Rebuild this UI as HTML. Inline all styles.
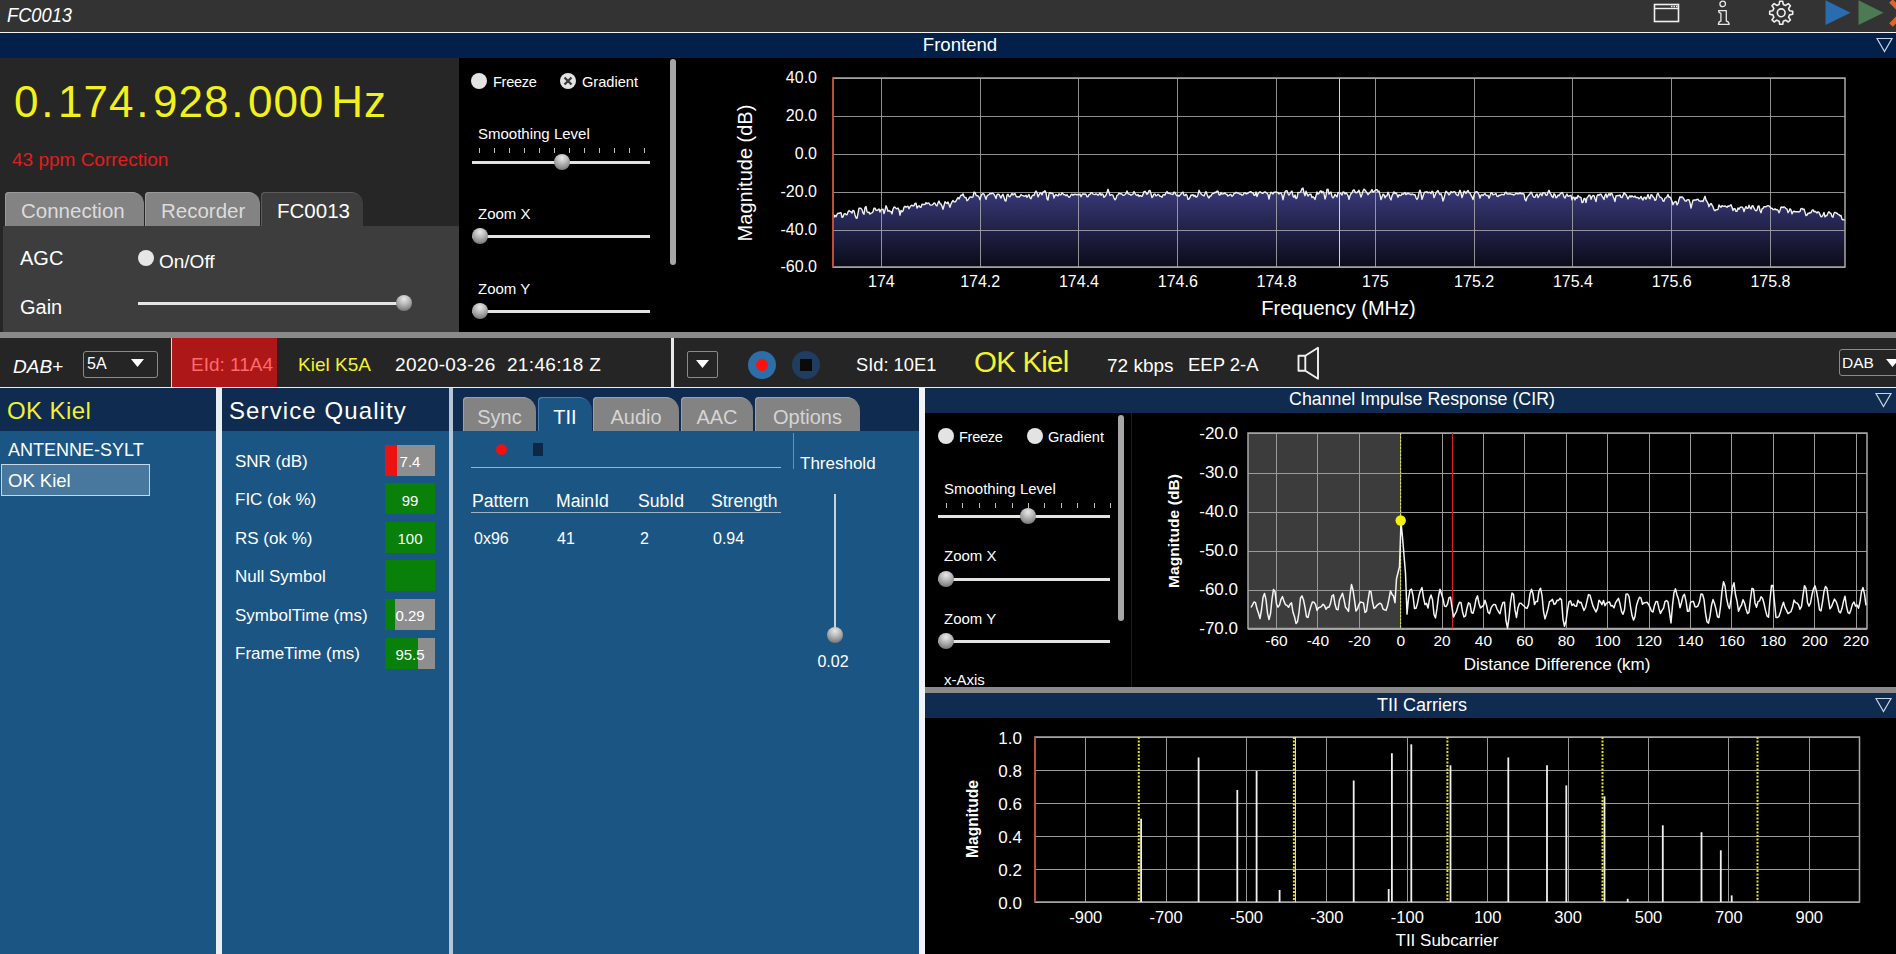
<!DOCTYPE html><html><head><meta charset="utf-8"><style>
html,body{margin:0;padding:0;width:1896px;height:954px;overflow:hidden;background:#262626;}
body{position:relative;font-family:"Liberation Sans",sans-serif;}
.t{position:absolute;white-space:nowrap;}
.b{position:absolute;}
.d{margin:0 3.5px 0 1.8px;}
svg{position:absolute;}
</style></head><body>
<div class="b" style="left:0px;top:0px;width:1896px;height:32px;background:#333333;"></div>
<div class="b" style="left:0px;top:32px;width:1896px;height:1px;background:#f4f4f4;"></div>
<div class="t" style="left:7px;top:4.1px;font-size:21px;line-height:21px;color:#ffffff;font-style:italic;transform:scaleX(0.87);transform-origin:0 0;">FC0013</div>
<div class="b" style="left:0px;top:33px;width:1896px;height:25px;background:#03204a;"></div>
<div class="t" style="left:660px;width:600px;text-align:center;top:35.5px;font-size:18.6px;line-height:18.6px;color:#ffffff;">Frontend</div>
<div class="b" style="left:0px;top:58px;width:459px;height:274px;background:#262626;"></div>
<div class="t" style="left:14px;top:80.3px;font-size:44px;line-height:44px;color:#f2f21a;letter-spacing:1px;">0<span class="d">.</span>174<span class="d">.</span>928<span class="d">.</span>000<span style="margin-left:7px">Hz</span></div>
<div class="t" style="left:12px;top:150.3px;font-size:19px;line-height:19px;color:#e41c1c;">43 ppm Correction</div>
<div class="b" style="left:3px;top:226px;width:456px;height:106px;background:#3d3d3d;"></div>
<div class="b" style="left:5px;top:192px;width:139px;height:34px;background:#838383;border-radius:4px 12px 0 0;box-shadow:inset 1px 1px 0 #9a9a9a;"></div>
<div class="t" style="left:21px;top:201.1px;font-size:20.5px;line-height:20.5px;color:#dcdcdc;">Connection</div>
<div class="b" style="left:145px;top:192px;width:115px;height:34px;background:#838383;border-radius:4px 12px 0 0;box-shadow:inset 1px 1px 0 #9a9a9a;"></div>
<div class="t" style="left:161px;top:201.1px;font-size:20.5px;line-height:20.5px;color:#dcdcdc;">Recorder</div>
<div class="b" style="left:261px;top:192px;width:102px;height:34px;background:#3d3d3d;border-radius:4px 12px 0 0;box-shadow:inset 1px 1px 0 #5a5a5a;"></div>
<div class="t" style="left:277px;top:201.1px;font-size:20.5px;line-height:20.5px;color:#ffffff;">FC0013</div>
<div class="t" style="left:20px;top:248.4px;font-size:20px;line-height:20px;color:#ffffff;">AGC</div>
<div class="b" style="left:138px;top:250px;width:16px;height:16px;border-radius:50%;background:#e6e6e6;"></div>
<div class="t" style="left:159px;top:251.8px;font-size:19px;line-height:19px;color:#ffffff;">On/Off</div>
<div class="t" style="left:20px;top:297.4px;font-size:20px;line-height:20px;color:#ffffff;">Gain</div>
<div class="b" style="left:138px;top:302px;width:260px;height:3px;background:#e6e6e6;"></div>
<div class="b" style="left:396px;top:295px;width:16px;height:16px;border-radius:50%;background:radial-gradient(circle at 50% 25%, #e8e8e8 0%, #bdbdbd 35%, #8a8a8a 70%, #5e5e5e 100%);"></div>
<div class="b" style="left:459px;top:58px;width:231px;height:274px;background:#000000;"></div>
<div class="b" style="left:471px;top:73px;width:16px;height:16px;border-radius:50%;background:#e3e3e3;"></div>
<div class="t" style="left:493px;top:74.5px;font-size:14.6px;line-height:14.6px;color:#ffffff;letter-spacing:-0.3px;">Freeze</div>
<div class="b" style="left:560px;top:73px;width:16px;height:16px;border-radius:50%;background:#e3e3e3;"></div>
<svg style="left:563px;top:76px" width="10" height="10"><path d="M1.5 1.5L8.5 8.5M8.5 1.5L1.5 8.5" stroke="#3a3a3a" stroke-width="2.2"/></svg>
<div class="t" style="left:582px;top:74.5px;font-size:14.6px;line-height:14.6px;color:#ffffff;">Gradient</div>
<div class="t" style="left:478px;top:125.8px;font-size:15px;line-height:15px;color:#ffffff;">Smoothing Level</div>
<div class="b" style="left:479px;top:148px;width:1px;height:5px;background:#c0c0c0;"></div>
<div class="b" style="left:494px;top:148px;width:1px;height:5px;background:#c0c0c0;"></div>
<div class="b" style="left:509px;top:148px;width:1px;height:5px;background:#c0c0c0;"></div>
<div class="b" style="left:524px;top:148px;width:1px;height:5px;background:#c0c0c0;"></div>
<div class="b" style="left:539px;top:148px;width:1px;height:5px;background:#c0c0c0;"></div>
<div class="b" style="left:554px;top:148px;width:1px;height:5px;background:#c0c0c0;"></div>
<div class="b" style="left:569px;top:148px;width:1px;height:5px;background:#c0c0c0;"></div>
<div class="b" style="left:584px;top:148px;width:1px;height:5px;background:#c0c0c0;"></div>
<div class="b" style="left:599px;top:148px;width:1px;height:5px;background:#c0c0c0;"></div>
<div class="b" style="left:614px;top:148px;width:1px;height:5px;background:#c0c0c0;"></div>
<div class="b" style="left:629px;top:148px;width:1px;height:5px;background:#c0c0c0;"></div>
<div class="b" style="left:644px;top:148px;width:1px;height:5px;background:#c0c0c0;"></div>
<div class="b" style="left:472px;top:161px;width:178px;height:3px;background:#e3e3e3;"></div>
<div class="b" style="left:554px;top:154px;width:16px;height:16px;border-radius:50%;background:radial-gradient(circle at 50% 25%, #e8e8e8 0%, #bdbdbd 35%, #8a8a8a 70%, #5e5e5e 100%);"></div>
<div class="t" style="left:478px;top:205.8px;font-size:15px;line-height:15px;color:#ffffff;">Zoom X</div>
<div class="b" style="left:472px;top:235px;width:178px;height:3px;background:#e3e3e3;"></div>
<div class="b" style="left:472px;top:228px;width:16px;height:16px;border-radius:50%;background:radial-gradient(circle at 50% 25%, #e8e8e8 0%, #bdbdbd 35%, #8a8a8a 70%, #5e5e5e 100%);"></div>
<div class="t" style="left:478px;top:280.8px;font-size:15px;line-height:15px;color:#ffffff;">Zoom Y</div>
<div class="b" style="left:472px;top:310px;width:178px;height:3px;background:#e3e3e3;"></div>
<div class="b" style="left:472px;top:303px;width:16px;height:16px;border-radius:50%;background:radial-gradient(circle at 50% 25%, #e8e8e8 0%, #bdbdbd 35%, #8a8a8a 70%, #5e5e5e 100%);"></div>
<div class="b" style="left:670px;top:59px;width:6px;height:206px;border-radius:3px;background:#a6a6a6;"></div>
<div class="b" style="left:690px;top:58px;width:1206px;height:274px;background:#000000;"></div>
<svg style="left:0;top:0" width="1896" height="954"><defs><linearGradient id="fg" x1="0" y1="0" x2="0" y2="1"><stop offset="0" stop-color="#3a3a7c"/><stop offset="1" stop-color="#0b0b1a"/></linearGradient></defs><path d="M833,267 L833.0,212.2 L834.0,217.3 L835.0,215.3 L836.0,216.7 L837.0,214.5 L838.0,213.1 L839.0,213.4 L840.0,212.8 L841.0,212.7 L842.0,217.3 L843.0,216.9 L844.0,214.1 L845.0,213.5 L846.0,214.6 L847.0,214.7 L848.0,212.0 L849.0,210.6 L850.0,211.4 L851.0,211.7 L852.0,213.0 L853.0,210.3 L854.0,210.8 L855.0,214.9 L856.0,217.8 L857.0,218.3 L858.0,213.3 L859.0,208.2 L860.0,208.1 L861.0,208.4 L862.0,209.6 L863.0,213.1 L864.0,214.2 L865.0,207.8 L866.0,206.5 L867.0,211.7 L868.0,212.5 L869.0,212.1 L870.0,214.1 L871.0,213.2 L872.0,212.9 L873.0,211.8 L874.0,208.2 L875.0,208.1 L876.0,210.1 L877.0,210.5 L878.0,209.7 L879.0,209.0 L880.0,212.1 L881.0,209.7 L882.0,209.4 L883.0,209.2 L884.0,213.6 L885.0,210.1 L886.0,205.8 L887.0,208.0 L888.0,211.2 L889.0,210.5 L890.0,211.5 L891.0,211.5 L892.0,213.9 L893.0,209.2 L894.0,207.0 L895.0,207.3 L896.0,208.4 L897.0,208.8 L898.0,208.1 L899.0,210.0 L900.0,215.2 L901.0,210.5 L902.0,211.7 L903.0,211.0 L904.0,207.3 L905.0,206.3 L906.0,207.2 L907.0,206.6 L908.0,206.2 L909.0,208.7 L910.0,206.9 L911.0,205.7 L912.0,205.2 L913.0,206.0 L914.0,205.6 L915.0,203.4 L916.0,203.1 L917.0,208.0 L918.0,206.5 L919.0,205.8 L920.0,207.0 L921.0,207.2 L922.0,204.3 L923.0,204.5 L924.0,204.5 L925.0,204.3 L926.0,202.6 L927.0,203.7 L928.0,203.0 L929.0,203.1 L930.0,204.9 L931.0,205.1 L932.0,205.0 L933.0,204.2 L934.0,203.0 L935.0,203.2 L936.0,205.2 L937.0,205.9 L938.0,202.9 L939.0,201.0 L940.0,203.6 L941.0,204.0 L942.0,206.1 L943.0,209.2 L944.0,205.6 L945.0,201.6 L946.0,202.9 L947.0,203.5 L948.0,202.0 L949.0,204.5 L950.0,207.2 L951.0,203.9 L952.0,202.0 L953.0,200.5 L954.0,201.7 L955.0,202.0 L956.0,201.0 L957.0,199.1 L958.0,197.5 L959.0,198.9 L960.0,197.0 L961.0,195.2 L962.0,195.4 L963.0,193.8 L964.0,196.5 L965.0,197.6 L966.0,197.5 L967.0,200.7 L968.0,200.0 L969.0,198.3 L970.0,197.0 L971.0,196.9 L972.0,197.5 L973.0,196.9 L974.0,192.2 L975.0,192.4 L976.0,195.1 L977.0,195.8 L978.0,196.0 L979.0,196.9 L980.0,199.7 L981.0,195.8 L982.0,194.1 L983.0,193.7 L984.0,194.2 L985.0,196.5 L986.0,199.3 L987.0,196.0 L988.0,195.1 L989.0,194.6 L990.0,193.5 L991.0,193.9 L992.0,193.2 L993.0,193.5 L994.0,194.3 L995.0,196.0 L996.0,198.5 L997.0,194.6 L998.0,194.1 L999.0,194.4 L1000.0,196.1 L1001.0,198.1 L1002.0,195.6 L1003.0,194.3 L1004.0,197.4 L1005.0,200.5 L1006.0,201.0 L1007.0,195.1 L1008.0,194.2 L1009.0,196.6 L1010.0,196.7 L1011.0,195.0 L1012.0,193.5 L1013.0,194.9 L1014.0,194.0 L1015.0,193.6 L1016.0,196.0 L1017.0,197.0 L1018.0,196.6 L1019.0,197.2 L1020.0,196.2 L1021.0,194.6 L1022.0,195.3 L1023.0,195.7 L1024.0,196.2 L1025.0,196.1 L1026.0,195.3 L1027.0,197.4 L1028.0,195.9 L1029.0,194.5 L1030.0,197.9 L1031.0,198.7 L1032.0,196.0 L1033.0,195.1 L1034.0,195.5 L1035.0,192.7 L1036.0,191.0 L1037.0,192.6 L1038.0,196.9 L1039.0,194.8 L1040.0,193.0 L1041.0,193.0 L1042.0,194.8 L1043.0,191.9 L1044.0,192.0 L1045.0,190.7 L1046.0,192.7 L1047.0,198.7 L1048.0,200.0 L1049.0,193.6 L1050.0,192.5 L1051.0,193.5 L1052.0,193.2 L1053.0,193.7 L1054.0,198.0 L1055.0,195.6 L1056.0,194.6 L1057.0,195.4 L1058.0,195.9 L1059.0,193.7 L1060.0,194.9 L1061.0,194.9 L1062.0,192.8 L1063.0,193.7 L1064.0,194.9 L1065.0,194.6 L1066.0,195.7 L1067.0,194.6 L1068.0,196.1 L1069.0,197.3 L1070.0,196.7 L1071.0,194.7 L1072.0,194.2 L1073.0,195.2 L1074.0,194.3 L1075.0,194.5 L1076.0,194.2 L1077.0,195.0 L1078.0,194.3 L1079.0,194.8 L1080.0,194.0 L1081.0,196.8 L1082.0,194.8 L1083.0,193.7 L1084.0,194.4 L1085.0,194.0 L1086.0,194.4 L1087.0,196.8 L1088.0,196.6 L1089.0,194.5 L1090.0,194.5 L1091.0,192.7 L1092.0,192.8 L1093.0,194.1 L1094.0,194.4 L1095.0,194.6 L1096.0,193.7 L1097.0,194.4 L1098.0,195.3 L1099.0,194.2 L1100.0,192.9 L1101.0,195.3 L1102.0,193.8 L1103.0,194.5 L1104.0,197.4 L1105.0,196.2 L1106.0,195.0 L1107.0,192.4 L1108.0,189.3 L1109.0,192.2 L1110.0,195.3 L1111.0,194.9 L1112.0,194.7 L1113.0,195.4 L1114.0,198.1 L1115.0,199.8 L1116.0,198.6 L1117.0,195.3 L1118.0,194.9 L1119.0,193.1 L1120.0,193.8 L1121.0,193.6 L1122.0,194.2 L1123.0,195.2 L1124.0,195.2 L1125.0,194.5 L1126.0,193.5 L1127.0,190.9 L1128.0,193.6 L1129.0,194.2 L1130.0,194.2 L1131.0,195.2 L1132.0,194.7 L1133.0,194.0 L1134.0,191.5 L1135.0,193.4 L1136.0,194.9 L1137.0,195.5 L1138.0,194.4 L1139.0,196.5 L1140.0,195.5 L1141.0,196.0 L1142.0,196.4 L1143.0,194.4 L1144.0,191.6 L1145.0,191.3 L1146.0,192.6 L1147.0,194.4 L1148.0,193.2 L1149.0,190.7 L1150.0,190.4 L1151.0,193.8 L1152.0,197.6 L1153.0,196.3 L1154.0,194.1 L1155.0,194.0 L1156.0,195.8 L1157.0,195.4 L1158.0,194.3 L1159.0,195.0 L1160.0,196.3 L1161.0,196.4 L1162.0,197.3 L1163.0,194.9 L1164.0,194.8 L1165.0,195.0 L1166.0,192.7 L1167.0,191.6 L1168.0,193.4 L1169.0,193.0 L1170.0,193.7 L1171.0,194.0 L1172.0,194.1 L1173.0,194.5 L1174.0,192.1 L1175.0,192.5 L1176.0,194.6 L1177.0,195.7 L1178.0,195.2 L1179.0,196.3 L1180.0,195.1 L1181.0,194.1 L1182.0,192.6 L1183.0,192.1 L1184.0,195.2 L1185.0,195.6 L1186.0,194.3 L1187.0,195.4 L1188.0,199.3 L1189.0,199.0 L1190.0,197.4 L1191.0,194.9 L1192.0,195.3 L1193.0,194.6 L1194.0,196.4 L1195.0,195.2 L1196.0,197.2 L1197.0,196.7 L1198.0,194.5 L1199.0,190.3 L1200.0,192.4 L1201.0,193.7 L1202.0,194.9 L1203.0,195.4 L1204.0,195.9 L1205.0,193.5 L1206.0,191.6 L1207.0,194.3 L1208.0,196.7 L1209.0,198.0 L1210.0,195.9 L1211.0,196.0 L1212.0,193.8 L1213.0,193.5 L1214.0,193.2 L1215.0,192.2 L1216.0,192.6 L1217.0,191.3 L1218.0,191.1 L1219.0,194.9 L1220.0,195.0 L1221.0,192.5 L1222.0,194.1 L1223.0,193.8 L1224.0,193.5 L1225.0,193.0 L1226.0,194.1 L1227.0,194.5 L1228.0,196.0 L1229.0,195.4 L1230.0,194.4 L1231.0,194.5 L1232.0,196.3 L1233.0,195.5 L1234.0,193.5 L1235.0,193.4 L1236.0,192.3 L1237.0,193.0 L1238.0,192.9 L1239.0,193.5 L1240.0,194.3 L1241.0,193.9 L1242.0,195.2 L1243.0,194.8 L1244.0,193.2 L1245.0,192.8 L1246.0,193.8 L1247.0,193.8 L1248.0,193.1 L1249.0,192.3 L1250.0,191.8 L1251.0,191.8 L1252.0,192.8 L1253.0,192.8 L1254.0,195.3 L1255.0,195.3 L1256.0,191.9 L1257.0,196.5 L1258.0,193.8 L1259.0,192.6 L1260.0,191.7 L1261.0,192.5 L1262.0,193.2 L1263.0,193.2 L1264.0,192.3 L1265.0,191.8 L1266.0,192.6 L1267.0,193.2 L1268.0,194.7 L1269.0,199.0 L1270.0,194.5 L1271.0,192.2 L1272.0,193.1 L1273.0,194.0 L1274.0,192.2 L1275.0,192.2 L1276.0,191.9 L1277.0,192.5 L1278.0,192.5 L1279.0,194.0 L1280.0,193.1 L1281.0,192.8 L1282.0,194.8 L1283.0,199.7 L1284.0,195.3 L1285.0,191.7 L1286.0,190.8 L1287.0,190.7 L1288.0,193.6 L1289.0,195.0 L1290.0,193.6 L1291.0,192.0 L1292.0,191.1 L1293.0,196.0 L1294.0,197.3 L1295.0,195.0 L1296.0,198.6 L1297.0,197.8 L1298.0,192.5 L1299.0,192.6 L1300.0,192.4 L1301.0,191.3 L1302.0,188.6 L1303.0,188.1 L1304.0,192.9 L1305.0,195.7 L1306.0,191.2 L1307.0,193.9 L1308.0,196.0 L1309.0,194.8 L1310.0,194.1 L1311.0,194.3 L1312.0,197.5 L1313.0,196.7 L1314.0,197.7 L1315.0,199.4 L1316.0,195.8 L1317.0,192.0 L1318.0,194.2 L1319.0,193.5 L1320.0,191.4 L1321.0,190.8 L1322.0,192.9 L1323.0,191.5 L1324.0,193.4 L1325.0,199.0 L1326.0,195.7 L1327.0,189.4 L1328.0,189.2 L1329.0,194.0 L1330.0,192.8 L1331.0,192.0 L1332.0,196.6 L1333.0,197.9 L1334.0,196.7 L1335.0,194.3 L1336.0,195.8 L1337.0,196.9 L1338.0,192.7 L1339.0,192.5 L1340.0,193.0 L1341.0,193.8 L1342.0,195.1 L1343.0,191.9 L1344.0,192.1 L1345.0,194.0 L1346.0,192.8 L1347.0,193.9 L1348.0,195.6 L1349.0,199.3 L1350.0,195.7 L1351.0,193.6 L1352.0,192.8 L1353.0,190.4 L1354.0,189.8 L1355.0,191.8 L1356.0,192.9 L1357.0,192.5 L1358.0,191.6 L1359.0,190.3 L1360.0,193.7 L1361.0,197.1 L1362.0,194.3 L1363.0,191.0 L1364.0,189.2 L1365.0,190.1 L1366.0,191.5 L1367.0,192.9 L1368.0,194.7 L1369.0,193.4 L1370.0,192.5 L1371.0,191.3 L1372.0,189.5 L1373.0,192.2 L1374.0,191.6 L1375.0,190.4 L1376.0,189.7 L1377.0,189.7 L1378.0,191.6 L1379.0,191.1 L1380.0,194.9 L1381.0,199.6 L1382.0,196.9 L1383.0,194.2 L1384.0,194.8 L1385.0,197.8 L1386.0,195.9 L1387.0,195.7 L1388.0,192.2 L1389.0,194.2 L1390.0,198.0 L1391.0,199.9 L1392.0,195.9 L1393.0,193.9 L1394.0,191.8 L1395.0,193.6 L1396.0,192.8 L1397.0,194.4 L1398.0,197.2 L1399.0,194.7 L1400.0,195.6 L1401.0,195.3 L1402.0,193.7 L1403.0,194.4 L1404.0,193.4 L1405.0,192.5 L1406.0,194.6 L1407.0,193.9 L1408.0,193.1 L1409.0,193.9 L1410.0,194.0 L1411.0,194.8 L1412.0,193.9 L1413.0,194.3 L1414.0,194.8 L1415.0,194.6 L1416.0,197.8 L1417.0,199.4 L1418.0,197.6 L1419.0,192.7 L1420.0,190.1 L1421.0,193.3 L1422.0,199.4 L1423.0,196.3 L1424.0,193.3 L1425.0,191.9 L1426.0,192.2 L1427.0,191.7 L1428.0,192.9 L1429.0,192.3 L1430.0,192.4 L1431.0,193.6 L1432.0,191.2 L1433.0,192.1 L1434.0,197.6 L1435.0,195.5 L1436.0,192.7 L1437.0,191.5 L1438.0,190.5 L1439.0,193.0 L1440.0,194.6 L1441.0,193.7 L1442.0,196.3 L1443.0,201.0 L1444.0,198.1 L1445.0,194.1 L1446.0,191.3 L1447.0,192.1 L1448.0,193.3 L1449.0,194.9 L1450.0,193.7 L1451.0,191.6 L1452.0,192.5 L1453.0,192.1 L1454.0,191.7 L1455.0,191.9 L1456.0,194.0 L1457.0,195.0 L1458.0,195.7 L1459.0,192.7 L1460.0,190.3 L1461.0,192.9 L1462.0,197.5 L1463.0,194.8 L1464.0,191.2 L1465.0,191.8 L1466.0,193.5 L1467.0,191.5 L1468.0,190.4 L1469.0,192.6 L1470.0,193.0 L1471.0,195.2 L1472.0,196.8 L1473.0,199.6 L1474.0,195.0 L1475.0,192.7 L1476.0,191.6 L1477.0,191.8 L1478.0,193.0 L1479.0,194.7 L1480.0,198.0 L1481.0,195.2 L1482.0,194.7 L1483.0,195.6 L1484.0,194.3 L1485.0,193.6 L1486.0,195.2 L1487.0,195.7 L1488.0,195.3 L1489.0,198.2 L1490.0,195.7 L1491.0,192.7 L1492.0,192.9 L1493.0,194.8 L1494.0,194.4 L1495.0,194.1 L1496.0,193.5 L1497.0,196.2 L1498.0,196.6 L1499.0,195.1 L1500.0,195.5 L1501.0,194.7 L1502.0,194.3 L1503.0,194.6 L1504.0,194.9 L1505.0,192.7 L1506.0,192.2 L1507.0,193.8 L1508.0,194.0 L1509.0,194.0 L1510.0,193.6 L1511.0,194.2 L1512.0,194.3 L1513.0,194.5 L1514.0,195.0 L1515.0,194.3 L1516.0,193.1 L1517.0,193.8 L1518.0,193.7 L1519.0,193.8 L1520.0,192.6 L1521.0,193.9 L1522.0,193.7 L1523.0,193.5 L1524.0,194.1 L1525.0,199.4 L1526.0,200.9 L1527.0,197.5 L1528.0,196.1 L1529.0,195.0 L1530.0,193.7 L1531.0,192.2 L1532.0,193.4 L1533.0,196.1 L1534.0,197.4 L1535.0,197.2 L1536.0,194.9 L1537.0,193.9 L1538.0,197.6 L1539.0,196.0 L1540.0,193.9 L1541.0,193.8 L1542.0,195.7 L1543.0,192.8 L1544.0,192.9 L1545.0,193.2 L1546.0,195.2 L1547.0,195.2 L1548.0,192.3 L1549.0,190.3 L1550.0,193.0 L1551.0,194.4 L1552.0,196.6 L1553.0,197.5 L1554.0,193.7 L1555.0,194.6 L1556.0,197.9 L1557.0,197.1 L1558.0,195.0 L1559.0,195.8 L1560.0,194.1 L1561.0,193.2 L1562.0,192.5 L1563.0,193.9 L1564.0,196.9 L1565.0,198.0 L1566.0,195.7 L1567.0,194.0 L1568.0,196.3 L1569.0,196.0 L1570.0,195.6 L1571.0,195.3 L1572.0,199.8 L1573.0,197.5 L1574.0,197.2 L1575.0,199.9 L1576.0,197.3 L1577.0,198.2 L1578.0,195.5 L1579.0,196.8 L1580.0,197.1 L1581.0,197.7 L1582.0,202.6 L1583.0,202.4 L1584.0,198.5 L1585.0,198.4 L1586.0,202.5 L1587.0,197.7 L1588.0,196.7 L1589.0,195.1 L1590.0,195.3 L1591.0,199.2 L1592.0,196.6 L1593.0,195.4 L1594.0,195.6 L1595.0,198.8 L1596.0,201.6 L1597.0,196.0 L1598.0,194.6 L1599.0,195.4 L1600.0,194.1 L1601.0,194.3 L1602.0,196.2 L1603.0,197.7 L1604.0,199.5 L1605.0,195.4 L1606.0,193.9 L1607.0,197.5 L1608.0,195.5 L1609.0,193.5 L1610.0,195.5 L1611.0,193.3 L1612.0,193.7 L1613.0,196.5 L1614.0,198.5 L1615.0,201.5 L1616.0,195.8 L1617.0,195.9 L1618.0,195.4 L1619.0,195.7 L1620.0,194.9 L1621.0,197.4 L1622.0,197.6 L1623.0,195.4 L1624.0,192.7 L1625.0,193.9 L1626.0,194.6 L1627.0,196.7 L1628.0,198.9 L1629.0,197.0 L1630.0,195.8 L1631.0,197.0 L1632.0,195.8 L1633.0,196.7 L1634.0,197.0 L1635.0,196.0 L1636.0,197.6 L1637.0,197.4 L1638.0,197.5 L1639.0,198.7 L1640.0,198.0 L1641.0,196.4 L1642.0,198.7 L1643.0,200.0 L1644.0,197.4 L1645.0,197.3 L1646.0,199.2 L1647.0,197.0 L1648.0,194.5 L1649.0,197.7 L1650.0,198.8 L1651.0,194.6 L1652.0,195.1 L1653.0,196.9 L1654.0,197.7 L1655.0,200.4 L1656.0,199.6 L1657.0,194.7 L1658.0,193.3 L1659.0,195.5 L1660.0,197.2 L1661.0,197.5 L1662.0,198.5 L1663.0,201.0 L1664.0,201.2 L1665.0,198.1 L1666.0,197.9 L1667.0,196.6 L1668.0,194.5 L1669.0,197.2 L1670.0,197.0 L1671.0,198.7 L1672.0,201.2 L1673.0,204.7 L1674.0,202.5 L1675.0,201.7 L1676.0,201.5 L1677.0,204.9 L1678.0,203.4 L1679.0,199.5 L1680.0,196.8 L1681.0,197.6 L1682.0,196.8 L1683.0,197.8 L1684.0,199.1 L1685.0,200.8 L1686.0,201.2 L1687.0,199.9 L1688.0,199.6 L1689.0,199.8 L1690.0,202.8 L1691.0,208.0 L1692.0,203.9 L1693.0,200.2 L1694.0,200.3 L1695.0,199.8 L1696.0,200.1 L1697.0,199.4 L1698.0,199.2 L1699.0,200.9 L1700.0,201.0 L1701.0,201.6 L1702.0,200.7 L1703.0,201.5 L1704.0,198.7 L1705.0,196.3 L1706.0,200.0 L1707.0,201.5 L1708.0,203.4 L1709.0,206.7 L1710.0,204.5 L1711.0,203.5 L1712.0,205.0 L1713.0,206.7 L1714.0,209.7 L1715.0,210.7 L1716.0,209.6 L1717.0,209.8 L1718.0,209.4 L1719.0,205.0 L1720.0,206.4 L1721.0,207.2 L1722.0,205.7 L1723.0,206.2 L1724.0,206.4 L1725.0,205.9 L1726.0,206.7 L1727.0,207.2 L1728.0,206.0 L1729.0,206.2 L1730.0,205.6 L1731.0,204.8 L1732.0,207.3 L1733.0,210.5 L1734.0,208.6 L1735.0,208.7 L1736.0,211.4 L1737.0,211.3 L1738.0,208.0 L1739.0,209.2 L1740.0,207.5 L1741.0,207.2 L1742.0,206.9 L1743.0,208.1 L1744.0,211.6 L1745.0,208.5 L1746.0,206.5 L1747.0,208.4 L1748.0,208.4 L1749.0,205.2 L1750.0,207.7 L1751.0,208.9 L1752.0,206.0 L1753.0,205.7 L1754.0,208.2 L1755.0,209.9 L1756.0,210.8 L1757.0,210.2 L1758.0,206.2 L1759.0,206.0 L1760.0,210.5 L1761.0,212.7 L1762.0,208.9 L1763.0,208.3 L1764.0,206.7 L1765.0,206.8 L1766.0,206.7 L1767.0,206.2 L1768.0,205.7 L1769.0,205.9 L1770.0,206.8 L1771.0,208.3 L1772.0,208.1 L1773.0,209.5 L1774.0,209.6 L1775.0,208.8 L1776.0,209.8 L1777.0,209.5 L1778.0,210.3 L1779.0,212.8 L1780.0,210.4 L1781.0,207.2 L1782.0,207.0 L1783.0,207.6 L1784.0,206.9 L1785.0,207.5 L1786.0,208.6 L1787.0,209.1 L1788.0,212.5 L1789.0,211.1 L1790.0,208.8 L1791.0,210.0 L1792.0,213.9 L1793.0,211.8 L1794.0,211.1 L1795.0,211.9 L1796.0,211.6 L1797.0,211.7 L1798.0,211.7 L1799.0,212.0 L1800.0,211.4 L1801.0,208.6 L1802.0,208.4 L1803.0,209.6 L1804.0,209.0 L1805.0,212.1 L1806.0,215.5 L1807.0,215.1 L1808.0,213.2 L1809.0,213.5 L1810.0,212.5 L1811.0,212.8 L1812.0,210.4 L1813.0,209.7 L1814.0,211.8 L1815.0,211.2 L1816.0,212.0 L1817.0,213.1 L1818.0,211.7 L1819.0,212.4 L1820.0,214.6 L1821.0,216.7 L1822.0,216.5 L1823.0,214.8 L1824.0,212.5 L1825.0,216.9 L1826.0,215.8 L1827.0,215.5 L1828.0,212.9 L1829.0,211.8 L1830.0,213.0 L1831.0,213.5 L1832.0,216.4 L1833.0,217.2 L1834.0,213.3 L1835.0,212.2 L1836.0,213.0 L1837.0,213.2 L1838.0,214.3 L1839.0,214.7 L1840.0,215.8 L1841.0,215.4 L1842.0,219.3 L1843.0,219.8 L1844.0,219.4 L1845.0,220.8 L1845,267 Z" fill="url(#fg)"/><path d="M833,78.5H1845 M833,116.5H1845 M833,154.5H1845 M833,192.5H1845 M833,230.5H1845 M833,267.5H1845 M881.5,78V267 M980.5,78V267 M1078.5,78V267 M1177.5,78V267 M1276.5,78V267 M1375.5,78V267 M1474.5,78V267 M1572.5,78V267 M1671.5,78V267 M1770.5,78V267" stroke="#a8a8a8" stroke-width="1" stroke-opacity="0.85" fill="none"/><polyline points="833.0,212.2 834.0,217.3 835.0,215.3 836.0,216.7 837.0,214.5 838.0,213.1 839.0,213.4 840.0,212.8 841.0,212.7 842.0,217.3 843.0,216.9 844.0,214.1 845.0,213.5 846.0,214.6 847.0,214.7 848.0,212.0 849.0,210.6 850.0,211.4 851.0,211.7 852.0,213.0 853.0,210.3 854.0,210.8 855.0,214.9 856.0,217.8 857.0,218.3 858.0,213.3 859.0,208.2 860.0,208.1 861.0,208.4 862.0,209.6 863.0,213.1 864.0,214.2 865.0,207.8 866.0,206.5 867.0,211.7 868.0,212.5 869.0,212.1 870.0,214.1 871.0,213.2 872.0,212.9 873.0,211.8 874.0,208.2 875.0,208.1 876.0,210.1 877.0,210.5 878.0,209.7 879.0,209.0 880.0,212.1 881.0,209.7 882.0,209.4 883.0,209.2 884.0,213.6 885.0,210.1 886.0,205.8 887.0,208.0 888.0,211.2 889.0,210.5 890.0,211.5 891.0,211.5 892.0,213.9 893.0,209.2 894.0,207.0 895.0,207.3 896.0,208.4 897.0,208.8 898.0,208.1 899.0,210.0 900.0,215.2 901.0,210.5 902.0,211.7 903.0,211.0 904.0,207.3 905.0,206.3 906.0,207.2 907.0,206.6 908.0,206.2 909.0,208.7 910.0,206.9 911.0,205.7 912.0,205.2 913.0,206.0 914.0,205.6 915.0,203.4 916.0,203.1 917.0,208.0 918.0,206.5 919.0,205.8 920.0,207.0 921.0,207.2 922.0,204.3 923.0,204.5 924.0,204.5 925.0,204.3 926.0,202.6 927.0,203.7 928.0,203.0 929.0,203.1 930.0,204.9 931.0,205.1 932.0,205.0 933.0,204.2 934.0,203.0 935.0,203.2 936.0,205.2 937.0,205.9 938.0,202.9 939.0,201.0 940.0,203.6 941.0,204.0 942.0,206.1 943.0,209.2 944.0,205.6 945.0,201.6 946.0,202.9 947.0,203.5 948.0,202.0 949.0,204.5 950.0,207.2 951.0,203.9 952.0,202.0 953.0,200.5 954.0,201.7 955.0,202.0 956.0,201.0 957.0,199.1 958.0,197.5 959.0,198.9 960.0,197.0 961.0,195.2 962.0,195.4 963.0,193.8 964.0,196.5 965.0,197.6 966.0,197.5 967.0,200.7 968.0,200.0 969.0,198.3 970.0,197.0 971.0,196.9 972.0,197.5 973.0,196.9 974.0,192.2 975.0,192.4 976.0,195.1 977.0,195.8 978.0,196.0 979.0,196.9 980.0,199.7 981.0,195.8 982.0,194.1 983.0,193.7 984.0,194.2 985.0,196.5 986.0,199.3 987.0,196.0 988.0,195.1 989.0,194.6 990.0,193.5 991.0,193.9 992.0,193.2 993.0,193.5 994.0,194.3 995.0,196.0 996.0,198.5 997.0,194.6 998.0,194.1 999.0,194.4 1000.0,196.1 1001.0,198.1 1002.0,195.6 1003.0,194.3 1004.0,197.4 1005.0,200.5 1006.0,201.0 1007.0,195.1 1008.0,194.2 1009.0,196.6 1010.0,196.7 1011.0,195.0 1012.0,193.5 1013.0,194.9 1014.0,194.0 1015.0,193.6 1016.0,196.0 1017.0,197.0 1018.0,196.6 1019.0,197.2 1020.0,196.2 1021.0,194.6 1022.0,195.3 1023.0,195.7 1024.0,196.2 1025.0,196.1 1026.0,195.3 1027.0,197.4 1028.0,195.9 1029.0,194.5 1030.0,197.9 1031.0,198.7 1032.0,196.0 1033.0,195.1 1034.0,195.5 1035.0,192.7 1036.0,191.0 1037.0,192.6 1038.0,196.9 1039.0,194.8 1040.0,193.0 1041.0,193.0 1042.0,194.8 1043.0,191.9 1044.0,192.0 1045.0,190.7 1046.0,192.7 1047.0,198.7 1048.0,200.0 1049.0,193.6 1050.0,192.5 1051.0,193.5 1052.0,193.2 1053.0,193.7 1054.0,198.0 1055.0,195.6 1056.0,194.6 1057.0,195.4 1058.0,195.9 1059.0,193.7 1060.0,194.9 1061.0,194.9 1062.0,192.8 1063.0,193.7 1064.0,194.9 1065.0,194.6 1066.0,195.7 1067.0,194.6 1068.0,196.1 1069.0,197.3 1070.0,196.7 1071.0,194.7 1072.0,194.2 1073.0,195.2 1074.0,194.3 1075.0,194.5 1076.0,194.2 1077.0,195.0 1078.0,194.3 1079.0,194.8 1080.0,194.0 1081.0,196.8 1082.0,194.8 1083.0,193.7 1084.0,194.4 1085.0,194.0 1086.0,194.4 1087.0,196.8 1088.0,196.6 1089.0,194.5 1090.0,194.5 1091.0,192.7 1092.0,192.8 1093.0,194.1 1094.0,194.4 1095.0,194.6 1096.0,193.7 1097.0,194.4 1098.0,195.3 1099.0,194.2 1100.0,192.9 1101.0,195.3 1102.0,193.8 1103.0,194.5 1104.0,197.4 1105.0,196.2 1106.0,195.0 1107.0,192.4 1108.0,189.3 1109.0,192.2 1110.0,195.3 1111.0,194.9 1112.0,194.7 1113.0,195.4 1114.0,198.1 1115.0,199.8 1116.0,198.6 1117.0,195.3 1118.0,194.9 1119.0,193.1 1120.0,193.8 1121.0,193.6 1122.0,194.2 1123.0,195.2 1124.0,195.2 1125.0,194.5 1126.0,193.5 1127.0,190.9 1128.0,193.6 1129.0,194.2 1130.0,194.2 1131.0,195.2 1132.0,194.7 1133.0,194.0 1134.0,191.5 1135.0,193.4 1136.0,194.9 1137.0,195.5 1138.0,194.4 1139.0,196.5 1140.0,195.5 1141.0,196.0 1142.0,196.4 1143.0,194.4 1144.0,191.6 1145.0,191.3 1146.0,192.6 1147.0,194.4 1148.0,193.2 1149.0,190.7 1150.0,190.4 1151.0,193.8 1152.0,197.6 1153.0,196.3 1154.0,194.1 1155.0,194.0 1156.0,195.8 1157.0,195.4 1158.0,194.3 1159.0,195.0 1160.0,196.3 1161.0,196.4 1162.0,197.3 1163.0,194.9 1164.0,194.8 1165.0,195.0 1166.0,192.7 1167.0,191.6 1168.0,193.4 1169.0,193.0 1170.0,193.7 1171.0,194.0 1172.0,194.1 1173.0,194.5 1174.0,192.1 1175.0,192.5 1176.0,194.6 1177.0,195.7 1178.0,195.2 1179.0,196.3 1180.0,195.1 1181.0,194.1 1182.0,192.6 1183.0,192.1 1184.0,195.2 1185.0,195.6 1186.0,194.3 1187.0,195.4 1188.0,199.3 1189.0,199.0 1190.0,197.4 1191.0,194.9 1192.0,195.3 1193.0,194.6 1194.0,196.4 1195.0,195.2 1196.0,197.2 1197.0,196.7 1198.0,194.5 1199.0,190.3 1200.0,192.4 1201.0,193.7 1202.0,194.9 1203.0,195.4 1204.0,195.9 1205.0,193.5 1206.0,191.6 1207.0,194.3 1208.0,196.7 1209.0,198.0 1210.0,195.9 1211.0,196.0 1212.0,193.8 1213.0,193.5 1214.0,193.2 1215.0,192.2 1216.0,192.6 1217.0,191.3 1218.0,191.1 1219.0,194.9 1220.0,195.0 1221.0,192.5 1222.0,194.1 1223.0,193.8 1224.0,193.5 1225.0,193.0 1226.0,194.1 1227.0,194.5 1228.0,196.0 1229.0,195.4 1230.0,194.4 1231.0,194.5 1232.0,196.3 1233.0,195.5 1234.0,193.5 1235.0,193.4 1236.0,192.3 1237.0,193.0 1238.0,192.9 1239.0,193.5 1240.0,194.3 1241.0,193.9 1242.0,195.2 1243.0,194.8 1244.0,193.2 1245.0,192.8 1246.0,193.8 1247.0,193.8 1248.0,193.1 1249.0,192.3 1250.0,191.8 1251.0,191.8 1252.0,192.8 1253.0,192.8 1254.0,195.3 1255.0,195.3 1256.0,191.9 1257.0,196.5 1258.0,193.8 1259.0,192.6 1260.0,191.7 1261.0,192.5 1262.0,193.2 1263.0,193.2 1264.0,192.3 1265.0,191.8 1266.0,192.6 1267.0,193.2 1268.0,194.7 1269.0,199.0 1270.0,194.5 1271.0,192.2 1272.0,193.1 1273.0,194.0 1274.0,192.2 1275.0,192.2 1276.0,191.9 1277.0,192.5 1278.0,192.5 1279.0,194.0 1280.0,193.1 1281.0,192.8 1282.0,194.8 1283.0,199.7 1284.0,195.3 1285.0,191.7 1286.0,190.8 1287.0,190.7 1288.0,193.6 1289.0,195.0 1290.0,193.6 1291.0,192.0 1292.0,191.1 1293.0,196.0 1294.0,197.3 1295.0,195.0 1296.0,198.6 1297.0,197.8 1298.0,192.5 1299.0,192.6 1300.0,192.4 1301.0,191.3 1302.0,188.6 1303.0,188.1 1304.0,192.9 1305.0,195.7 1306.0,191.2 1307.0,193.9 1308.0,196.0 1309.0,194.8 1310.0,194.1 1311.0,194.3 1312.0,197.5 1313.0,196.7 1314.0,197.7 1315.0,199.4 1316.0,195.8 1317.0,192.0 1318.0,194.2 1319.0,193.5 1320.0,191.4 1321.0,190.8 1322.0,192.9 1323.0,191.5 1324.0,193.4 1325.0,199.0 1326.0,195.7 1327.0,189.4 1328.0,189.2 1329.0,194.0 1330.0,192.8 1331.0,192.0 1332.0,196.6 1333.0,197.9 1334.0,196.7 1335.0,194.3 1336.0,195.8 1337.0,196.9 1338.0,192.7 1339.0,192.5 1340.0,193.0 1341.0,193.8 1342.0,195.1 1343.0,191.9 1344.0,192.1 1345.0,194.0 1346.0,192.8 1347.0,193.9 1348.0,195.6 1349.0,199.3 1350.0,195.7 1351.0,193.6 1352.0,192.8 1353.0,190.4 1354.0,189.8 1355.0,191.8 1356.0,192.9 1357.0,192.5 1358.0,191.6 1359.0,190.3 1360.0,193.7 1361.0,197.1 1362.0,194.3 1363.0,191.0 1364.0,189.2 1365.0,190.1 1366.0,191.5 1367.0,192.9 1368.0,194.7 1369.0,193.4 1370.0,192.5 1371.0,191.3 1372.0,189.5 1373.0,192.2 1374.0,191.6 1375.0,190.4 1376.0,189.7 1377.0,189.7 1378.0,191.6 1379.0,191.1 1380.0,194.9 1381.0,199.6 1382.0,196.9 1383.0,194.2 1384.0,194.8 1385.0,197.8 1386.0,195.9 1387.0,195.7 1388.0,192.2 1389.0,194.2 1390.0,198.0 1391.0,199.9 1392.0,195.9 1393.0,193.9 1394.0,191.8 1395.0,193.6 1396.0,192.8 1397.0,194.4 1398.0,197.2 1399.0,194.7 1400.0,195.6 1401.0,195.3 1402.0,193.7 1403.0,194.4 1404.0,193.4 1405.0,192.5 1406.0,194.6 1407.0,193.9 1408.0,193.1 1409.0,193.9 1410.0,194.0 1411.0,194.8 1412.0,193.9 1413.0,194.3 1414.0,194.8 1415.0,194.6 1416.0,197.8 1417.0,199.4 1418.0,197.6 1419.0,192.7 1420.0,190.1 1421.0,193.3 1422.0,199.4 1423.0,196.3 1424.0,193.3 1425.0,191.9 1426.0,192.2 1427.0,191.7 1428.0,192.9 1429.0,192.3 1430.0,192.4 1431.0,193.6 1432.0,191.2 1433.0,192.1 1434.0,197.6 1435.0,195.5 1436.0,192.7 1437.0,191.5 1438.0,190.5 1439.0,193.0 1440.0,194.6 1441.0,193.7 1442.0,196.3 1443.0,201.0 1444.0,198.1 1445.0,194.1 1446.0,191.3 1447.0,192.1 1448.0,193.3 1449.0,194.9 1450.0,193.7 1451.0,191.6 1452.0,192.5 1453.0,192.1 1454.0,191.7 1455.0,191.9 1456.0,194.0 1457.0,195.0 1458.0,195.7 1459.0,192.7 1460.0,190.3 1461.0,192.9 1462.0,197.5 1463.0,194.8 1464.0,191.2 1465.0,191.8 1466.0,193.5 1467.0,191.5 1468.0,190.4 1469.0,192.6 1470.0,193.0 1471.0,195.2 1472.0,196.8 1473.0,199.6 1474.0,195.0 1475.0,192.7 1476.0,191.6 1477.0,191.8 1478.0,193.0 1479.0,194.7 1480.0,198.0 1481.0,195.2 1482.0,194.7 1483.0,195.6 1484.0,194.3 1485.0,193.6 1486.0,195.2 1487.0,195.7 1488.0,195.3 1489.0,198.2 1490.0,195.7 1491.0,192.7 1492.0,192.9 1493.0,194.8 1494.0,194.4 1495.0,194.1 1496.0,193.5 1497.0,196.2 1498.0,196.6 1499.0,195.1 1500.0,195.5 1501.0,194.7 1502.0,194.3 1503.0,194.6 1504.0,194.9 1505.0,192.7 1506.0,192.2 1507.0,193.8 1508.0,194.0 1509.0,194.0 1510.0,193.6 1511.0,194.2 1512.0,194.3 1513.0,194.5 1514.0,195.0 1515.0,194.3 1516.0,193.1 1517.0,193.8 1518.0,193.7 1519.0,193.8 1520.0,192.6 1521.0,193.9 1522.0,193.7 1523.0,193.5 1524.0,194.1 1525.0,199.4 1526.0,200.9 1527.0,197.5 1528.0,196.1 1529.0,195.0 1530.0,193.7 1531.0,192.2 1532.0,193.4 1533.0,196.1 1534.0,197.4 1535.0,197.2 1536.0,194.9 1537.0,193.9 1538.0,197.6 1539.0,196.0 1540.0,193.9 1541.0,193.8 1542.0,195.7 1543.0,192.8 1544.0,192.9 1545.0,193.2 1546.0,195.2 1547.0,195.2 1548.0,192.3 1549.0,190.3 1550.0,193.0 1551.0,194.4 1552.0,196.6 1553.0,197.5 1554.0,193.7 1555.0,194.6 1556.0,197.9 1557.0,197.1 1558.0,195.0 1559.0,195.8 1560.0,194.1 1561.0,193.2 1562.0,192.5 1563.0,193.9 1564.0,196.9 1565.0,198.0 1566.0,195.7 1567.0,194.0 1568.0,196.3 1569.0,196.0 1570.0,195.6 1571.0,195.3 1572.0,199.8 1573.0,197.5 1574.0,197.2 1575.0,199.9 1576.0,197.3 1577.0,198.2 1578.0,195.5 1579.0,196.8 1580.0,197.1 1581.0,197.7 1582.0,202.6 1583.0,202.4 1584.0,198.5 1585.0,198.4 1586.0,202.5 1587.0,197.7 1588.0,196.7 1589.0,195.1 1590.0,195.3 1591.0,199.2 1592.0,196.6 1593.0,195.4 1594.0,195.6 1595.0,198.8 1596.0,201.6 1597.0,196.0 1598.0,194.6 1599.0,195.4 1600.0,194.1 1601.0,194.3 1602.0,196.2 1603.0,197.7 1604.0,199.5 1605.0,195.4 1606.0,193.9 1607.0,197.5 1608.0,195.5 1609.0,193.5 1610.0,195.5 1611.0,193.3 1612.0,193.7 1613.0,196.5 1614.0,198.5 1615.0,201.5 1616.0,195.8 1617.0,195.9 1618.0,195.4 1619.0,195.7 1620.0,194.9 1621.0,197.4 1622.0,197.6 1623.0,195.4 1624.0,192.7 1625.0,193.9 1626.0,194.6 1627.0,196.7 1628.0,198.9 1629.0,197.0 1630.0,195.8 1631.0,197.0 1632.0,195.8 1633.0,196.7 1634.0,197.0 1635.0,196.0 1636.0,197.6 1637.0,197.4 1638.0,197.5 1639.0,198.7 1640.0,198.0 1641.0,196.4 1642.0,198.7 1643.0,200.0 1644.0,197.4 1645.0,197.3 1646.0,199.2 1647.0,197.0 1648.0,194.5 1649.0,197.7 1650.0,198.8 1651.0,194.6 1652.0,195.1 1653.0,196.9 1654.0,197.7 1655.0,200.4 1656.0,199.6 1657.0,194.7 1658.0,193.3 1659.0,195.5 1660.0,197.2 1661.0,197.5 1662.0,198.5 1663.0,201.0 1664.0,201.2 1665.0,198.1 1666.0,197.9 1667.0,196.6 1668.0,194.5 1669.0,197.2 1670.0,197.0 1671.0,198.7 1672.0,201.2 1673.0,204.7 1674.0,202.5 1675.0,201.7 1676.0,201.5 1677.0,204.9 1678.0,203.4 1679.0,199.5 1680.0,196.8 1681.0,197.6 1682.0,196.8 1683.0,197.8 1684.0,199.1 1685.0,200.8 1686.0,201.2 1687.0,199.9 1688.0,199.6 1689.0,199.8 1690.0,202.8 1691.0,208.0 1692.0,203.9 1693.0,200.2 1694.0,200.3 1695.0,199.8 1696.0,200.1 1697.0,199.4 1698.0,199.2 1699.0,200.9 1700.0,201.0 1701.0,201.6 1702.0,200.7 1703.0,201.5 1704.0,198.7 1705.0,196.3 1706.0,200.0 1707.0,201.5 1708.0,203.4 1709.0,206.7 1710.0,204.5 1711.0,203.5 1712.0,205.0 1713.0,206.7 1714.0,209.7 1715.0,210.7 1716.0,209.6 1717.0,209.8 1718.0,209.4 1719.0,205.0 1720.0,206.4 1721.0,207.2 1722.0,205.7 1723.0,206.2 1724.0,206.4 1725.0,205.9 1726.0,206.7 1727.0,207.2 1728.0,206.0 1729.0,206.2 1730.0,205.6 1731.0,204.8 1732.0,207.3 1733.0,210.5 1734.0,208.6 1735.0,208.7 1736.0,211.4 1737.0,211.3 1738.0,208.0 1739.0,209.2 1740.0,207.5 1741.0,207.2 1742.0,206.9 1743.0,208.1 1744.0,211.6 1745.0,208.5 1746.0,206.5 1747.0,208.4 1748.0,208.4 1749.0,205.2 1750.0,207.7 1751.0,208.9 1752.0,206.0 1753.0,205.7 1754.0,208.2 1755.0,209.9 1756.0,210.8 1757.0,210.2 1758.0,206.2 1759.0,206.0 1760.0,210.5 1761.0,212.7 1762.0,208.9 1763.0,208.3 1764.0,206.7 1765.0,206.8 1766.0,206.7 1767.0,206.2 1768.0,205.7 1769.0,205.9 1770.0,206.8 1771.0,208.3 1772.0,208.1 1773.0,209.5 1774.0,209.6 1775.0,208.8 1776.0,209.8 1777.0,209.5 1778.0,210.3 1779.0,212.8 1780.0,210.4 1781.0,207.2 1782.0,207.0 1783.0,207.6 1784.0,206.9 1785.0,207.5 1786.0,208.6 1787.0,209.1 1788.0,212.5 1789.0,211.1 1790.0,208.8 1791.0,210.0 1792.0,213.9 1793.0,211.8 1794.0,211.1 1795.0,211.9 1796.0,211.6 1797.0,211.7 1798.0,211.7 1799.0,212.0 1800.0,211.4 1801.0,208.6 1802.0,208.4 1803.0,209.6 1804.0,209.0 1805.0,212.1 1806.0,215.5 1807.0,215.1 1808.0,213.2 1809.0,213.5 1810.0,212.5 1811.0,212.8 1812.0,210.4 1813.0,209.7 1814.0,211.8 1815.0,211.2 1816.0,212.0 1817.0,213.1 1818.0,211.7 1819.0,212.4 1820.0,214.6 1821.0,216.7 1822.0,216.5 1823.0,214.8 1824.0,212.5 1825.0,216.9 1826.0,215.8 1827.0,215.5 1828.0,212.9 1829.0,211.8 1830.0,213.0 1831.0,213.5 1832.0,216.4 1833.0,217.2 1834.0,213.3 1835.0,212.2 1836.0,213.0 1837.0,213.2 1838.0,214.3 1839.0,214.7 1840.0,215.8 1841.0,215.4 1842.0,219.3 1843.0,219.8 1844.0,219.4 1845.0,220.8" fill="none" stroke="#f0f0f0" stroke-width="1.4" stroke-linejoin="round"/><path d="M1339.5,78V267" stroke="#e8e82a" stroke-width="1"/><rect x="833" y="78" width="1012" height="189" fill="none" stroke="#a8a8a8" stroke-width="1.5"/><path d="M833,78V267" stroke="#c8402a" stroke-width="1.5"/></svg>
<div class="t" style="right:1079px;top:70.3px;font-size:16px;line-height:16px;color:#ffffff;">40.0</div>
<div class="t" style="right:1079px;top:108.1px;font-size:16px;line-height:16px;color:#ffffff;">20.0</div>
<div class="t" style="right:1079px;top:145.9px;font-size:16px;line-height:16px;color:#ffffff;">0.0</div>
<div class="t" style="right:1079px;top:183.7px;font-size:16px;line-height:16px;color:#ffffff;">-20.0</div>
<div class="t" style="right:1079px;top:221.5px;font-size:16px;line-height:16px;color:#ffffff;">-40.0</div>
<div class="t" style="right:1079px;top:259.3px;font-size:16px;line-height:16px;color:#ffffff;">-60.0</div>
<div class="t" style="left:581.4px;width:600px;text-align:center;top:274.3px;font-size:16px;line-height:16px;color:#ffffff;">174</div>
<div class="t" style="left:680.1899999999999px;width:600px;text-align:center;top:274.3px;font-size:16px;line-height:16px;color:#ffffff;">174.2</div>
<div class="t" style="left:778.98px;width:600px;text-align:center;top:274.3px;font-size:16px;line-height:16px;color:#ffffff;">174.4</div>
<div class="t" style="left:877.77px;width:600px;text-align:center;top:274.3px;font-size:16px;line-height:16px;color:#ffffff;">174.6</div>
<div class="t" style="left:976.56px;width:600px;text-align:center;top:274.3px;font-size:16px;line-height:16px;color:#ffffff;">174.8</div>
<div class="t" style="left:1075.35px;width:600px;text-align:center;top:274.3px;font-size:16px;line-height:16px;color:#ffffff;">175</div>
<div class="t" style="left:1174.1399999999999px;width:600px;text-align:center;top:274.3px;font-size:16px;line-height:16px;color:#ffffff;">175.2</div>
<div class="t" style="left:1272.93px;width:600px;text-align:center;top:274.3px;font-size:16px;line-height:16px;color:#ffffff;">175.4</div>
<div class="t" style="left:1371.72px;width:600px;text-align:center;top:274.3px;font-size:16px;line-height:16px;color:#ffffff;">175.6</div>
<div class="t" style="left:1470.51px;width:600px;text-align:center;top:274.3px;font-size:16px;line-height:16px;color:#ffffff;">175.8</div>
<div class="t" style="left:1038.5px;width:600px;text-align:center;top:298.4px;font-size:20px;line-height:20px;color:#ffffff;">Frequency (MHz)</div>
<div class="t" style="left:745px;top:173px;font-size:20px;line-height:20px;color:#fff;transform:translate(-50%,-50%) rotate(-90deg);">Magnitude (dB)</div>
<div class="b" style="left:0px;top:332px;width:1896px;height:6px;background:#8a8a8a;"></div>
<div class="b" style="left:0px;top:338px;width:1896px;height:49px;background:#252525;"></div>
<div class="t" style="left:13px;top:356.8px;font-size:19px;line-height:19px;color:#ffffff;font-style:italic;">DAB+</div>
<div class="b" style="left:83px;top:351px;width:75px;height:27px;border:1px solid #8a8a8a;border-radius:3px;box-sizing:border-box;"></div>
<div class="t" style="left:87px;top:356.3px;font-size:16px;line-height:16px;color:#ffffff;">5A</div>
<svg style="left:131px;top:359px" width="14" height="9"><path d="M0,0H13L6.5,8Z" fill="#fff"/></svg>
<div class="b" style="left:171px;top:338px;width:1px;height:49px;background:#d8d8d8;"></div>
<div class="b" style="left:172px;top:338px;width:105px;height:49px;background:#ad1717;"></div>
<div class="t" style="left:191px;top:354.8px;font-size:19px;line-height:19px;color:#ff6a6a;">EId: 11A4</div>
<div class="t" style="left:298px;top:354.8px;font-size:19px;line-height:19px;color:#f2f230;">Kiel K5A</div>
<div class="t" style="left:395px;top:354.8px;font-size:19px;line-height:19px;color:#ffffff;letter-spacing:0.35px;">2020-03-26&nbsp;&nbsp;21:46:18 Z</div>
<div class="b" style="left:671px;top:338px;width:3px;height:49px;background:#e8e8e8;"></div>
<div class="b" style="left:687px;top:351px;width:31px;height:27px;border:1px solid #8a8a8a;border-radius:2px;box-sizing:border-box;"></div>
<svg style="left:696px;top:360px" width="14" height="9"><path d="M0,0H13L6.5,8Z" fill="#fff"/></svg>
<div class="b" style="left:748px;top:351px;width:28px;height:28px;border-radius:50%;background:#2d6da8;"></div>
<div class="b" style="left:756px;top:359px;width:12px;height:12px;border-radius:50%;background:#ff1010;"></div>
<div class="b" style="left:792px;top:351px;width:28px;height:28px;border-radius:50%;background:#1f3d5e;"></div>
<div class="b" style="left:800px;top:359px;width:12px;height:12px;background:#0a0a0a;"></div>
<div class="t" style="left:856px;top:356.2px;font-size:18.3px;line-height:18.3px;color:#ffffff;">SId: 10E1</div>
<div class="t" style="left:974px;top:347.3px;font-size:29.5px;line-height:29.5px;color:#f2f230;letter-spacing:-0.8px;">OK Kiel</div>
<div class="t" style="left:1107px;top:355.8px;font-size:19px;line-height:19px;color:#ffffff;">72 kbps</div>
<div class="t" style="left:1188px;top:356.1px;font-size:18.5px;line-height:18.5px;color:#ffffff;">EEP 2-A</div>
<svg style="left:1295px;top:345px" width="26" height="37"><path d="M3.5,10.8H10.3L23,2.8V33.8L10.3,25.8H3.5ZM10.3,10.8V25.8" fill="none" stroke="#f0f0f0" stroke-width="1.9" stroke-linejoin="round"/></svg>
<div class="b" style="left:1839px;top:349px;width:70px;height:27px;border:1px solid #8a8a8a;border-radius:3px;box-sizing:border-box;"></div>
<div class="t" style="left:1842px;top:354.5px;font-size:15.5px;line-height:15.5px;color:#ffffff;">DAB</div>
<svg style="left:1886px;top:359px" width="14" height="9"><path d="M0,0H13L6.5,8Z" fill="#fff"/></svg>
<div class="b" style="left:0px;top:387px;width:1896px;height:1px;background:#e8ecf0;"></div>
<div class="b" style="left:0px;top:388px;width:216px;height:43px;background:#0f2b4f;"></div>
<div class="b" style="left:0px;top:431px;width:216px;height:523px;background:#1b5584;"></div>
<div class="t" style="left:7px;top:398.9px;font-size:24px;line-height:24px;color:#f2f230;letter-spacing:0.4px;">OK Kiel</div>
<div class="t" style="left:8px;top:441.3px;font-size:18px;line-height:18px;color:#ffffff;">ANTENNE-SYLT</div>
<div class="b" style="left:1px;top:464px;width:149px;height:32px;background:#48789e;border:1px solid #c4d8ea;box-sizing:border-box;"></div>
<div class="t" style="left:8px;top:472.1px;font-size:18.5px;line-height:18.5px;color:#ffffff;">OK Kiel</div>
<div class="b" style="left:216px;top:388px;width:6px;height:566px;background:#e8eef4;"></div>
<div class="b" style="left:222px;top:388px;width:227px;height:43px;background:#0f2b4f;"></div>
<div class="b" style="left:222px;top:431px;width:227px;height:523px;background:#1b5584;"></div>
<div class="t" style="left:229px;top:398.9px;font-size:24px;line-height:24px;color:#ffffff;letter-spacing:1.1px;">Service Quality</div>
<div class="t" style="left:235px;top:452.6px;font-size:17px;line-height:17px;color:#ffffff;">SNR (dB)</div>
<div class="b" style="left:385px;top:445px;width:50px;height:31px;background:#8e8e8e;"></div>
<div class="b" style="left:385px;top:445px;width:12px;height:31px;background:#ee1111;"></div>
<div class="t" style="left:110px;width:600px;text-align:center;top:454.1px;font-size:15px;line-height:15px;color:#ffffff;">7.4</div>
<div class="t" style="left:235px;top:491.2px;font-size:17px;line-height:17px;color:#ffffff;">FIC (ok %)</div>
<div class="b" style="left:385px;top:483px;width:50px;height:31px;background:#8e8e8e;"></div>
<div class="b" style="left:385px;top:483px;width:50px;height:31px;background:#098009;"></div>
<div class="t" style="left:110px;width:600px;text-align:center;top:492.6px;font-size:15px;line-height:15px;color:#ffffff;">99</div>
<div class="t" style="left:235px;top:529.7px;font-size:17px;line-height:17px;color:#ffffff;">RS (ok %)</div>
<div class="b" style="left:385px;top:522px;width:50px;height:31px;background:#8e8e8e;"></div>
<div class="b" style="left:385px;top:522px;width:50px;height:31px;background:#098009;"></div>
<div class="t" style="left:110px;width:600px;text-align:center;top:531.2px;font-size:15px;line-height:15px;color:#ffffff;">100</div>
<div class="t" style="left:235px;top:568.3px;font-size:17px;line-height:17px;color:#ffffff;">Null Symbol</div>
<div class="b" style="left:385px;top:560px;width:50px;height:31px;background:#8e8e8e;"></div>
<div class="b" style="left:385px;top:560px;width:50px;height:31px;background:#098009;"></div>
<div class="t" style="left:235px;top:606.8px;font-size:17px;line-height:17px;color:#ffffff;">SymbolTime (ms)</div>
<div class="b" style="left:385px;top:599px;width:50px;height:31px;background:#8e8e8e;"></div>
<div class="b" style="left:385px;top:599px;width:10px;height:31px;background:#098009;"></div>
<div class="t" style="left:110px;width:600px;text-align:center;top:608.3px;font-size:15px;line-height:15px;color:#ffffff;">0.29</div>
<div class="t" style="left:235px;top:645.4px;font-size:17px;line-height:17px;color:#ffffff;">FrameTime (ms)</div>
<div class="b" style="left:385px;top:638px;width:50px;height:31px;background:#8e8e8e;"></div>
<div class="b" style="left:385px;top:638px;width:33px;height:31px;background:#098009;"></div>
<div class="t" style="left:110px;width:600px;text-align:center;top:646.8px;font-size:15px;line-height:15px;color:#ffffff;">95.5</div>
<div class="b" style="left:449px;top:388px;width:4px;height:566px;background:#b4c6d8;"></div>
<div class="b" style="left:453px;top:388px;width:466px;height:43px;background:#0f2b4f;"></div>
<div class="b" style="left:453px;top:431px;width:466px;height:523px;background:#1b5584;"></div>
<div class="b" style="left:463px;top:397px;width:73px;height:34px;background:#838383;border-radius:4px 14px 0 0;box-shadow:inset 1px 1px 0 #a0a0a0;"></div>
<div class="t" style="left:199.5px;width:600px;text-align:center;top:407.4px;font-size:20px;line-height:20px;color:#d4d4d4;">Sync</div>
<div class="b" style="left:538px;top:397px;width:54px;height:34px;background:#1b5584;border-radius:4px 14px 0 0;box-shadow:inset 1px 1px 0 #4a80b0;"></div>
<div class="t" style="left:265.0px;width:600px;text-align:center;top:407.4px;font-size:20px;line-height:20px;color:#ffffff;">TII</div>
<div class="b" style="left:593px;top:397px;width:86px;height:34px;background:#838383;border-radius:4px 14px 0 0;box-shadow:inset 1px 1px 0 #a0a0a0;"></div>
<div class="t" style="left:336.0px;width:600px;text-align:center;top:407.4px;font-size:20px;line-height:20px;color:#d4d4d4;">Audio</div>
<div class="b" style="left:681px;top:397px;width:72px;height:34px;background:#838383;border-radius:4px 14px 0 0;box-shadow:inset 1px 1px 0 #a0a0a0;"></div>
<div class="t" style="left:417.0px;width:600px;text-align:center;top:407.4px;font-size:20px;line-height:20px;color:#d4d4d4;">AAC</div>
<div class="b" style="left:755px;top:397px;width:105px;height:34px;background:#838383;border-radius:4px 14px 0 0;box-shadow:inset 1px 1px 0 #a0a0a0;"></div>
<div class="t" style="left:507.5px;width:600px;text-align:center;top:407.4px;font-size:20px;line-height:20px;color:#d4d4d4;">Options</div>
<div class="b" style="left:496px;top:444px;width:11px;height:11px;border-radius:50%;background:#f01010;"></div>
<div class="b" style="left:533px;top:443px;width:10px;height:13px;background:#0e2742;"></div>
<div class="b" style="left:471px;top:467px;width:310px;height:1px;background:#9cb4c8;"></div>
<div class="b" style="left:793px;top:433px;width:1px;height:36px;background:#6a90b0;"></div>
<div class="t" style="left:800px;top:455.3px;font-size:17px;line-height:17px;color:#ffffff;">Threshold</div>
<div class="t" style="left:472px;top:493.0px;font-size:17.6px;line-height:17.6px;color:#ffffff;">Pattern</div>
<div class="t" style="left:556px;top:493.0px;font-size:17.6px;line-height:17.6px;color:#ffffff;">MainId</div>
<div class="t" style="left:638px;top:493.0px;font-size:17.6px;line-height:17.6px;color:#ffffff;">SubId</div>
<div class="t" style="left:711px;top:493.0px;font-size:17.6px;line-height:17.6px;color:#ffffff;">Strength</div>
<div class="b" style="left:471px;top:512px;width:310px;height:1px;background:#9cb4c8;"></div>
<div class="t" style="left:474px;top:530.8px;font-size:16px;line-height:16px;color:#ffffff;">0x96</div>
<div class="t" style="left:557px;top:530.8px;font-size:16px;line-height:16px;color:#ffffff;">41</div>
<div class="t" style="left:640px;top:530.8px;font-size:16px;line-height:16px;color:#ffffff;">2</div>
<div class="t" style="left:713px;top:530.8px;font-size:16px;line-height:16px;color:#ffffff;">0.94</div>
<div class="b" style="left:834px;top:494px;width:2px;height:134px;background:#d0d0d0;"></div>
<div class="b" style="left:826.5px;top:627px;width:16px;height:16px;border-radius:50%;background:radial-gradient(circle at 50% 25%, #e8e8e8 0%, #bdbdbd 35%, #8a8a8a 70%, #5e5e5e 100%);"></div>
<div class="t" style="left:533px;width:600px;text-align:center;top:654.3px;font-size:16px;line-height:16px;color:#ffffff;">0.02</div>
<div class="b" style="left:919px;top:388px;width:6px;height:566px;background:#f0f4f8;"></div>
<div class="b" style="left:925px;top:388px;width:971px;height:25px;background:#0f2b4f;"></div>
<div class="t" style="left:1122px;width:600px;text-align:center;top:390.9px;font-size:17.8px;line-height:17.8px;color:#ffffff;">Channel Impulse Response (CIR)</div>
<svg style="left:1875px;top:392px" width="18" height="16"><path d="M1,1.5H16L8.5,14.5Z" fill="none" stroke="#c8d4e0" stroke-width="1.2"/></svg>
<svg style="left:1876px;top:37px" width="18" height="16"><path d="M1,1.5H16L8.5,14.5Z" fill="none" stroke="#c8d4e0" stroke-width="1.2"/></svg>
<div class="b" style="left:925px;top:413px;width:971px;height:274px;background:#000000;"></div>
<div class="b" style="left:938px;top:428px;width:16px;height:16px;border-radius:50%;background:#e3e3e3;"></div>
<div class="t" style="left:959px;top:429.5px;font-size:14.6px;line-height:14.6px;color:#ffffff;letter-spacing:-0.3px;">Freeze</div>
<div class="b" style="left:1027px;top:428px;width:16px;height:16px;border-radius:50%;background:#e3e3e3;"></div>
<div class="t" style="left:1048px;top:429.5px;font-size:14.6px;line-height:14.6px;color:#ffffff;">Gradient</div>
<div class="t" style="left:944px;top:480.8px;font-size:15px;line-height:15px;color:#ffffff;">Smoothing Level</div>
<div class="b" style="left:946.0px;top:503px;width:1px;height:5px;background:#c0c0c0;"></div>
<div class="b" style="left:962.4px;top:503px;width:1px;height:5px;background:#c0c0c0;"></div>
<div class="b" style="left:978.8px;top:503px;width:1px;height:5px;background:#c0c0c0;"></div>
<div class="b" style="left:995.2px;top:503px;width:1px;height:5px;background:#c0c0c0;"></div>
<div class="b" style="left:1011.6px;top:503px;width:1px;height:5px;background:#c0c0c0;"></div>
<div class="b" style="left:1028.0px;top:503px;width:1px;height:5px;background:#c0c0c0;"></div>
<div class="b" style="left:1044.4px;top:503px;width:1px;height:5px;background:#c0c0c0;"></div>
<div class="b" style="left:1060.8px;top:503px;width:1px;height:5px;background:#c0c0c0;"></div>
<div class="b" style="left:1077.2px;top:503px;width:1px;height:5px;background:#c0c0c0;"></div>
<div class="b" style="left:1093.6px;top:503px;width:1px;height:5px;background:#c0c0c0;"></div>
<div class="b" style="left:1110.0px;top:503px;width:1px;height:5px;background:#c0c0c0;"></div>
<div class="b" style="left:938px;top:515px;width:172px;height:3px;background:#e3e3e3;"></div>
<div class="b" style="left:1020px;top:508px;width:16px;height:16px;border-radius:50%;background:radial-gradient(circle at 50% 25%, #e8e8e8 0%, #bdbdbd 35%, #8a8a8a 70%, #5e5e5e 100%);"></div>
<div class="t" style="left:944px;top:547.8px;font-size:15px;line-height:15px;color:#ffffff;">Zoom X</div>
<div class="b" style="left:938px;top:578px;width:172px;height:3px;background:#e3e3e3;"></div>
<div class="b" style="left:938px;top:571px;width:16px;height:16px;border-radius:50%;background:radial-gradient(circle at 50% 25%, #e8e8e8 0%, #bdbdbd 35%, #8a8a8a 70%, #5e5e5e 100%);"></div>
<div class="t" style="left:944px;top:610.8px;font-size:15px;line-height:15px;color:#ffffff;">Zoom Y</div>
<div class="b" style="left:938px;top:640px;width:172px;height:3px;background:#e3e3e3;"></div>
<div class="b" style="left:938px;top:633px;width:16px;height:16px;border-radius:50%;background:radial-gradient(circle at 50% 25%, #e8e8e8 0%, #bdbdbd 35%, #8a8a8a 70%, #5e5e5e 100%);"></div>
<div class="t" style="left:944px;top:672.3px;font-size:15px;line-height:15px;color:#ffffff;">x-Axis</div>
<div class="b" style="left:1118px;top:415px;width:6px;height:206px;border-radius:3px;background:#a6a6a6;"></div>
<div class="b" style="left:1131px;top:413px;width:1px;height:274px;background:#1c1c1c;"></div>
<svg style="left:0;top:0" width="1896" height="954"><rect x="1248" y="433" width="152.7" height="195.5" fill="#3c3c3c"/><path d="M1248,433.5H1867 M1248,473.5H1867 M1248,512.5H1867 M1248,551.5H1867 M1248,590.5H1867 M1248,629.5H1867 M1276.5,433V628.5 M1317.5,433V628.5 M1359.5,433V628.5 M1400.5,433V628.5 M1442.5,433V628.5 M1483.5,433V628.5 M1524.5,433V628.5 M1566.5,433V628.5 M1607.5,433V628.5 M1649.5,433V628.5 M1690.5,433V628.5 M1731.5,433V628.5 M1773.5,433V628.5 M1814.5,433V628.5 M1856.5,433V628.5" stroke="#9a9a9a" stroke-width="1" fill="none"/><rect x="1248" y="433" width="619" height="195.5" fill="none" stroke="#a8a8a8" stroke-width="1.5"/><path d="M1400.7,433V628.5" stroke="#e8e82a" stroke-width="1" stroke-dasharray="2,1.5"/><path d="M1452.5,433V628.5" stroke="#d02020" stroke-width="1.2"/><polyline points="1251.0,607.5 1252.5,604.9 1254.0,602.0 1255.5,602.6 1257.0,609.1 1258.5,613.3 1260.0,618.5 1261.5,610.0 1263.0,597.6 1264.5,593.4 1266.0,599.7 1267.5,613.2 1269.0,619.6 1270.5,613.8 1272.0,599.2 1273.5,589.4 1275.0,591.7 1276.5,604.0 1278.0,607.1 1279.5,605.1 1281.0,599.3 1282.5,596.6 1284.0,601.4 1285.5,604.8 1287.0,605.4 1288.5,607.3 1290.0,604.3 1291.5,602.8 1293.0,612.3 1294.5,616.7 1296.0,623.4 1297.5,621.7 1299.0,612.3 1300.5,598.0 1302.0,595.9 1303.5,600.0 1305.0,607.4 1306.5,616.8 1308.0,617.5 1309.5,611.1 1311.0,605.7 1312.5,601.9 1314.0,602.3 1315.5,604.4 1317.0,610.4 1318.5,607.8 1320.0,607.3 1321.5,606.4 1323.0,604.2 1324.5,605.6 1326.0,609.3 1327.5,607.3 1329.0,607.2 1330.5,603.4 1332.0,595.9 1333.5,594.9 1335.0,604.3 1336.5,609.4 1338.0,609.8 1339.5,600.0 1341.0,596.5 1342.5,593.3 1344.0,599.6 1345.5,607.3 1347.0,609.1 1348.5,611.4 1350.0,595.2 1351.5,584.4 1353.0,590.0 1354.5,600.2 1356.0,611.1 1357.5,608.9 1359.0,604.3 1360.5,602.0 1362.0,602.4 1363.5,603.0 1365.0,612.5 1366.5,611.2 1368.0,600.7 1369.5,591.1 1371.0,591.8 1372.5,602.0 1374.0,608.4 1375.5,607.4 1377.0,605.3 1378.5,604.1 1380.0,603.2 1381.5,604.3 1383.0,608.9 1384.5,609.9 1386.0,610.4 1387.5,606.1 1389.0,598.8 1390.5,590.8 1392.0,594.4 1393.5,596.1 1395.0,602.7 1396.5,578.8 1398.0,572.8 1399.5,566.8 1401.0,522.0 1402.5,537.2 1404.0,555.2 1405.5,573.2 1407.0,614.1 1408.5,598.5 1410.0,590.1 1411.5,589.1 1413.0,595.7 1414.5,608.6 1416.0,608.2 1417.5,603.2 1419.0,595.4 1420.5,590.5 1422.0,587.6 1423.5,597.6 1425.0,604.6 1426.5,603.4 1428.0,608.1 1429.5,599.2 1431.0,594.9 1432.5,599.8 1434.0,614.5 1435.5,617.9 1437.0,608.4 1438.5,596.7 1440.0,589.2 1441.5,594.0 1443.0,598.8 1444.5,606.1 1446.0,606.6 1447.5,604.1 1449.0,597.6 1450.5,597.1 1452.0,607.4 1453.5,617.1 1455.0,614.0 1456.5,611.3 1458.0,605.9 1459.5,602.2 1461.0,602.7 1462.5,611.7 1464.0,617.0 1465.5,615.8 1467.0,608.2 1468.5,602.8 1470.0,603.8 1471.5,612.5 1473.0,613.3 1474.5,607.8 1476.0,599.2 1477.5,595.9 1479.0,603.5 1480.5,607.9 1482.0,606.7 1483.5,605.5 1485.0,600.3 1486.5,605.0 1488.0,612.2 1489.5,613.6 1491.0,608.2 1492.5,605.5 1494.0,604.4 1495.5,604.8 1497.0,609.0 1498.5,611.7 1500.0,613.7 1501.5,606.8 1503.0,602.4 1504.5,602.2 1506.0,620.7 1507.5,628.2 1509.0,617.6 1510.5,602.1 1512.0,592.9 1513.5,594.6 1515.0,609.9 1516.5,617.5 1518.0,607.7 1519.5,603.3 1521.0,603.3 1522.5,604.7 1524.0,606.0 1525.5,607.7 1527.0,608.4 1528.5,604.9 1530.0,594.0 1531.5,589.2 1533.0,593.9 1534.5,604.6 1536.0,601.5 1537.5,601.4 1539.0,591.1 1540.5,588.2 1542.0,595.4 1543.5,611.3 1545.0,618.9 1546.5,614.1 1548.0,608.7 1549.5,601.6 1551.0,600.9 1552.5,599.4 1554.0,604.2 1555.5,603.7 1557.0,600.3 1558.5,600.4 1560.0,598.4 1561.5,599.9 1563.0,619.3 1564.5,626.3 1566.0,621.3 1567.5,610.2 1569.0,601.8 1570.5,600.8 1572.0,605.4 1573.5,604.0 1575.0,606.1 1576.5,606.3 1578.0,600.3 1579.5,602.7 1581.0,602.2 1582.5,606.4 1584.0,610.4 1585.5,607.5 1587.0,601.1 1588.5,594.6 1590.0,595.1 1591.5,600.7 1593.0,606.2 1594.5,609.1 1596.0,611.9 1597.5,608.4 1599.0,600.2 1600.5,601.9 1602.0,604.6 1603.5,600.4 1605.0,605.7 1606.5,603.1 1608.0,602.3 1609.5,602.1 1611.0,605.9 1612.5,605.6 1614.0,607.8 1615.5,602.9 1617.0,600.5 1618.5,598.4 1620.0,603.8 1621.5,611.3 1623.0,614.3 1624.5,609.8 1626.0,594.3 1627.5,593.9 1629.0,596.5 1630.5,606.5 1632.0,615.6 1633.5,620.1 1635.0,616.4 1636.5,605.6 1638.0,600.7 1639.5,597.2 1641.0,598.1 1642.5,604.3 1644.0,602.9 1645.5,602.6 1647.0,602.2 1648.5,604.2 1650.0,607.3 1651.5,611.2 1653.0,612.0 1654.5,605.4 1656.0,601.4 1657.5,601.8 1659.0,608.7 1660.5,613.4 1662.0,610.4 1663.5,608.3 1665.0,601.7 1666.5,600.5 1668.0,602.1 1669.5,612.4 1671.0,622.9 1672.5,605.4 1674.0,592.5 1675.5,588.9 1677.0,595.0 1678.5,599.2 1680.0,607.7 1681.5,602.5 1683.0,596.2 1684.5,594.3 1686.0,601.2 1687.5,611.3 1689.0,611.2 1690.5,602.4 1692.0,601.6 1693.5,601.6 1695.0,606.7 1696.5,606.9 1698.0,605.8 1699.5,601.8 1701.0,594.1 1702.5,594.3 1704.0,599.4 1705.5,613.1 1707.0,621.8 1708.5,623.1 1710.0,616.2 1711.5,605.3 1713.0,599.6 1714.5,603.5 1716.0,609.1 1717.5,616.8 1719.0,617.5 1720.5,606.6 1722.0,591.2 1723.5,581.7 1725.0,586.0 1726.5,597.9 1728.0,605.2 1729.5,608.6 1731.0,599.6 1732.5,586.9 1734.0,582.8 1735.5,594.8 1737.0,601.0 1738.5,611.2 1740.0,607.6 1741.5,605.2 1743.0,599.6 1744.5,603.0 1746.0,608.9 1747.5,613.6 1749.0,612.2 1750.5,598.8 1752.0,588.3 1753.5,589.2 1755.0,602.9 1756.5,607.2 1758.0,601.6 1759.5,600.9 1761.0,596.7 1762.5,598.2 1764.0,603.5 1765.5,610.4 1767.0,615.9 1768.5,617.3 1770.0,599.5 1771.5,585.4 1773.0,585.5 1774.5,602.3 1776.0,617.5 1777.5,617.5 1779.0,616.2 1780.5,611.9 1782.0,606.5 1783.5,602.3 1785.0,607.6 1786.5,610.4 1788.0,613.6 1789.5,612.6 1791.0,611.6 1792.5,607.3 1794.0,600.1 1795.5,602.6 1797.0,603.0 1798.5,604.8 1800.0,609.2 1801.5,606.3 1803.0,595.3 1804.5,585.7 1806.0,588.7 1807.5,602.5 1809.0,606.1 1810.5,603.0 1812.0,594.7 1813.5,588.8 1815.0,585.8 1816.5,591.4 1818.0,599.6 1819.5,609.8 1821.0,610.9 1822.5,602.1 1824.0,591.5 1825.5,586.4 1827.0,588.5 1828.5,599.7 1830.0,608.8 1831.5,606.6 1833.0,602.8 1834.5,599.1 1836.0,601.3 1837.5,605.5 1839.0,611.6 1840.5,612.8 1842.0,608.3 1843.5,601.4 1845.0,596.2 1846.5,606.5 1848.0,612.6 1849.5,613.5 1851.0,609.4 1852.5,604.1 1854.0,602.0 1855.5,606.1 1857.0,605.0 1858.5,608.3 1860.0,602.1 1861.5,591.5 1863.0,587.6 1864.5,594.1 1866.0,605.4" fill="none" stroke="#f4f4f4" stroke-width="1.5" stroke-linejoin="round"/><circle cx="1400.7" cy="520.5" r="5.2" fill="#f5f010"/></svg>
<div class="t" style="right:658px;top:424.8px;font-size:17px;line-height:17px;color:#ffffff;">-20.0</div>
<div class="t" style="right:658px;top:463.9px;font-size:17px;line-height:17px;color:#ffffff;">-30.0</div>
<div class="t" style="right:658px;top:503.0px;font-size:17px;line-height:17px;color:#ffffff;">-40.0</div>
<div class="t" style="right:658px;top:542.1px;font-size:17px;line-height:17px;color:#ffffff;">-50.0</div>
<div class="t" style="right:658px;top:581.2px;font-size:17px;line-height:17px;color:#ffffff;">-60.0</div>
<div class="t" style="right:658px;top:620.3px;font-size:17px;line-height:17px;color:#ffffff;">-70.0</div>
<div class="t" style="left:976.5240000000001px;width:600px;text-align:center;top:633.0px;font-size:15.5px;line-height:15.5px;color:#ffffff;">-60</div>
<div class="t" style="left:1017.9160000000002px;width:600px;text-align:center;top:633.0px;font-size:15.5px;line-height:15.5px;color:#ffffff;">-40</div>
<div class="t" style="left:1059.308px;width:600px;text-align:center;top:633.0px;font-size:15.5px;line-height:15.5px;color:#ffffff;">-20</div>
<div class="t" style="left:1100.7px;width:600px;text-align:center;top:633.0px;font-size:15.5px;line-height:15.5px;color:#ffffff;">0</div>
<div class="t" style="left:1142.092px;width:600px;text-align:center;top:633.0px;font-size:15.5px;line-height:15.5px;color:#ffffff;">20</div>
<div class="t" style="left:1183.484px;width:600px;text-align:center;top:633.0px;font-size:15.5px;line-height:15.5px;color:#ffffff;">40</div>
<div class="t" style="left:1224.876px;width:600px;text-align:center;top:633.0px;font-size:15.5px;line-height:15.5px;color:#ffffff;">60</div>
<div class="t" style="left:1266.268px;width:600px;text-align:center;top:633.0px;font-size:15.5px;line-height:15.5px;color:#ffffff;">80</div>
<div class="t" style="left:1307.66px;width:600px;text-align:center;top:633.0px;font-size:15.5px;line-height:15.5px;color:#ffffff;">100</div>
<div class="t" style="left:1349.0520000000001px;width:600px;text-align:center;top:633.0px;font-size:15.5px;line-height:15.5px;color:#ffffff;">120</div>
<div class="t" style="left:1390.444px;width:600px;text-align:center;top:633.0px;font-size:15.5px;line-height:15.5px;color:#ffffff;">140</div>
<div class="t" style="left:1431.836px;width:600px;text-align:center;top:633.0px;font-size:15.5px;line-height:15.5px;color:#ffffff;">160</div>
<div class="t" style="left:1473.228px;width:600px;text-align:center;top:633.0px;font-size:15.5px;line-height:15.5px;color:#ffffff;">180</div>
<div class="t" style="left:1514.62px;width:600px;text-align:center;top:633.0px;font-size:15.5px;line-height:15.5px;color:#ffffff;">200</div>
<div class="t" style="left:1556.012px;width:600px;text-align:center;top:633.0px;font-size:15.5px;line-height:15.5px;color:#ffffff;">220</div>
<div class="t" style="left:1257px;width:600px;text-align:center;top:656.3px;font-size:17px;line-height:17px;color:#ffffff;">Distance Difference (km)</div>
<div class="t" style="left:1174px;top:531px;font-size:15.5px;line-height:16px;color:#fff;font-weight:bold;letter-spacing:0.1px;transform:translate(-50%,-50%) rotate(-90deg);">Magnitude (dB)</div>
<div class="b" style="left:925px;top:687px;width:971px;height:6px;background:#8a8a8a;"></div>
<div class="b" style="left:925px;top:693px;width:971px;height:25px;background:#0f2b4f;"></div>
<div class="t" style="left:1122px;width:600px;text-align:center;top:695.8px;font-size:18px;line-height:18px;color:#ffffff;">TII Carriers</div>
<svg style="left:1875px;top:697px" width="18" height="16"><path d="M1,1.5H16L8.5,14.5Z" fill="none" stroke="#c8d4e0" stroke-width="1.2"/></svg>
<div class="b" style="left:925px;top:718px;width:971px;height:236px;background:#000000;"></div>
<svg style="left:0;top:0" width="1896" height="954"><path d="M1035,737.5H1859.5 M1035,770.5H1859.5 M1035,803.5H1859.5 M1035,836.5H1859.5 M1035,869.5H1859.5 M1035,902.5H1859.5 M1085.5,737V902 M1166.5,737V902 M1246.5,737V902 M1326.5,737V902 M1407.5,737V902 M1487.5,737V902 M1568.5,737V902 M1648.5,737V902 M1728.5,737V902 M1809.5,737V902" stroke="#9a9a9a" stroke-width="1" fill="none"/><rect x="1035" y="737" width="824.5" height="165" fill="none" stroke="#a8a8a8" stroke-width="1.5"/><path d="M1035,737V902" stroke="#c8402a" stroke-width="1.5"/><path d="M1138.8,737V902" stroke="#e8e020" stroke-width="2" stroke-dasharray="2,1.5"/><path d="M1293.9,737V902" stroke="#e8e020" stroke-width="2" stroke-dasharray="2,1.5"/><path d="M1447.4,737V902" stroke="#e8e020" stroke-width="2" stroke-dasharray="2,1.5"/><path d="M1602.5,737V902" stroke="#e8e020" stroke-width="2" stroke-dasharray="2,1.5"/><path d="M1757.5,737V902" stroke="#e8e020" stroke-width="2" stroke-dasharray="2,1.5"/><path d="M1295.5,737V902" stroke="#d8d8d8" stroke-width="1"/><path d="M1141.1,818.7V902" stroke="#f0f0f0" stroke-width="1.8"/><path d="M1198.6,757.5V902" stroke="#f0f0f0" stroke-width="1.8"/><path d="M1237.3,790.0V902" stroke="#f0f0f0" stroke-width="1.8"/><path d="M1256.6,771.0V902" stroke="#f0f0f0" stroke-width="1.8"/><path d="M1279.6,890.0V902" stroke="#f0f0f0" stroke-width="1.8"/><path d="M1353.7,780.5V902" stroke="#f0f0f0" stroke-width="1.8"/><path d="M1388.7,889.0V902" stroke="#f0f0f0" stroke-width="1.8"/><path d="M1391.9,753.2V902" stroke="#f0f0f0" stroke-width="1.8"/><path d="M1411.3,744.3V902" stroke="#f0f0f0" stroke-width="1.8"/><path d="M1450.5,765.3V902" stroke="#f0f0f0" stroke-width="1.8"/><path d="M1508.3,757.5V902" stroke="#f0f0f0" stroke-width="1.8"/><path d="M1547.0,765.3V902" stroke="#f0f0f0" stroke-width="1.8"/><path d="M1566.3,785.4V902" stroke="#f0f0f0" stroke-width="1.8"/><path d="M1604.5,796.3V902" stroke="#f0f0f0" stroke-width="1.8"/><path d="M1627.7,898.8V902" stroke="#f0f0f0" stroke-width="1.8"/><path d="M1662.8,825.3V902" stroke="#f0f0f0" stroke-width="1.8"/><path d="M1701.5,832.2V902" stroke="#f0f0f0" stroke-width="1.8"/><path d="M1720.8,850.3V902" stroke="#f0f0f0" stroke-width="1.8"/><path d="M1731.7,895.4V902" stroke="#f0f0f0" stroke-width="1.8"/></svg>
<div class="t" style="right:874px;top:729.8px;font-size:17px;line-height:17px;color:#ffffff;">1.0</div>
<div class="t" style="right:874px;top:762.8px;font-size:17px;line-height:17px;color:#ffffff;">0.8</div>
<div class="t" style="right:874px;top:795.8px;font-size:17px;line-height:17px;color:#ffffff;">0.6</div>
<div class="t" style="right:874px;top:828.8px;font-size:17px;line-height:17px;color:#ffffff;">0.4</div>
<div class="t" style="right:874px;top:861.8px;font-size:17px;line-height:17px;color:#ffffff;">0.2</div>
<div class="t" style="right:874px;top:894.8px;font-size:17px;line-height:17px;color:#ffffff;">0.0</div>
<div class="t" style="left:785.7449999999999px;width:600px;text-align:center;top:909.0px;font-size:16.5px;line-height:16.5px;color:#ffffff;">-900</div>
<div class="t" style="left:866.135px;width:600px;text-align:center;top:909.0px;font-size:16.5px;line-height:16.5px;color:#ffffff;">-700</div>
<div class="t" style="left:946.5250000000001px;width:600px;text-align:center;top:909.0px;font-size:16.5px;line-height:16.5px;color:#ffffff;">-500</div>
<div class="t" style="left:1026.915px;width:600px;text-align:center;top:909.0px;font-size:16.5px;line-height:16.5px;color:#ffffff;">-300</div>
<div class="t" style="left:1107.305px;width:600px;text-align:center;top:909.0px;font-size:16.5px;line-height:16.5px;color:#ffffff;">-100</div>
<div class="t" style="left:1187.695px;width:600px;text-align:center;top:909.0px;font-size:16.5px;line-height:16.5px;color:#ffffff;">100</div>
<div class="t" style="left:1268.085px;width:600px;text-align:center;top:909.0px;font-size:16.5px;line-height:16.5px;color:#ffffff;">300</div>
<div class="t" style="left:1348.475px;width:600px;text-align:center;top:909.0px;font-size:16.5px;line-height:16.5px;color:#ffffff;">500</div>
<div class="t" style="left:1428.865px;width:600px;text-align:center;top:909.0px;font-size:16.5px;line-height:16.5px;color:#ffffff;">700</div>
<div class="t" style="left:1509.255px;width:600px;text-align:center;top:909.0px;font-size:16.5px;line-height:16.5px;color:#ffffff;">900</div>
<div class="t" style="left:1147px;width:600px;text-align:center;top:932.3px;font-size:17px;line-height:17px;color:#ffffff;">TII Subcarrier</div>
<div class="t" style="left:972.5px;top:819px;font-size:15.6px;line-height:16px;color:#fff;font-weight:bold;transform:translate(-50%,-50%) rotate(-90deg);">Magnitude</div>
<svg style="left:1650px;top:0" width="246" height="32">
<rect x="4.5" y="4.5" width="24" height="17" fill="none" stroke="#f0f0f0" stroke-width="1.6"/>
<path d="M4.5,8.5H28.5" stroke="#f0f0f0" stroke-width="1.4"/>
<path d="M21,6.5h1.5M23.5,6.5h1.5M26,6.5h1.5" stroke="#f0f0f0" stroke-width="1.3"/>
<circle cx="72.7" cy="3.9" r="2.8" fill="none" stroke="#e8e8e8" stroke-width="1.3"/>
<path d="M68.6,10.6H76.3V21.2Q78.8,21.4 79.2,24.4H68.4Q68.6,21.4 70.9,21.2V13.2Q68.6,13.2 68.6,10.6Z" fill="none" stroke="#e8e8e8" stroke-width="1.3" stroke-linejoin="round"/>
<path d="M1852,0" />
</svg>
<svg style="left:0;top:0" width="1896" height="32"><path d="M1779.12,4.46 L1779.69,1.30 L1782.71,1.30 L1783.28,4.46 L1785.63,5.43 L1788.26,3.60 L1790.40,5.74 L1788.57,8.37 L1789.54,10.72 L1792.70,11.29 L1792.70,14.31 L1789.54,14.88 L1788.57,17.23 L1790.40,19.86 L1788.26,22.00 L1785.63,20.17 L1783.28,21.14 L1782.71,24.30 L1779.69,24.30 L1779.12,21.14 L1776.77,20.17 L1774.14,22.00 L1772.00,19.86 L1773.83,17.23 L1772.86,14.88 L1769.70,14.31 L1769.70,11.29 L1772.86,10.72 L1773.83,8.37 L1772.00,5.74 L1774.14,3.60 L1776.77,5.43Z" fill="none" stroke="#f0f0f0" stroke-width="1.6" stroke-linejoin="round"/><circle cx="1781.2" cy="12.8" r="3.9" fill="none" stroke="#f0f0f0" stroke-width="1.6"/><path d="M1825.5,0.3L1850.5,12.7L1825.5,25Z" fill="#2a6cb0"/><path d="M1858.5,0.3L1883.5,12.7L1858.5,25Z" fill="#4c7a52"/><path d="M1891,1L1899,9M1891,25L1899,17" stroke="#e06428" stroke-width="5"/></svg>
</body></html>
